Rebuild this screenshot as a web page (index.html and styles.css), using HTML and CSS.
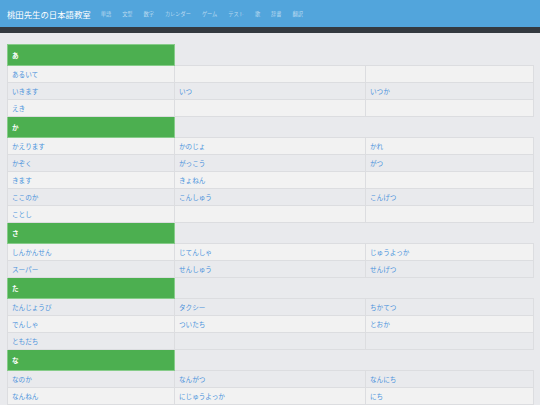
FILE: index.html
```html
<!DOCTYPE html>
<html lang="ja">
<head>
<meta charset="utf-8">
<title>桃田先生の日本語教室</title>
<link rel="stylesheet" href="styles.css">
</head>
<body>
<header class="navbar">
  <a class="brand" href="#">桃田先生の日本語教室</a>
  <nav class="nav">
    <a href="#">単語</a>
    <a href="#">文型</a>
    <a href="#">数字</a>
    <a href="#">カレンダー</a>
    <a href="#">ゲーム</a>
    <a href="#">テスト</a>
    <a href="#">歌</a>
    <a href="#">辞書</a>
    <a href="#">翻訳</a>
  </nav>
</header>
<div class="band"></div>
<main class="content">
  <table class="words">
    <colgroup><col class="c1"><col class="c2"><col class="c3"></colgroup>
    <tbody>
      <tr class="kana"><th>あ</th></tr>
      <tr><td><a href="#">あるいて</a></td><td></td><td></td></tr>
      <tr><td><a href="#">いきます</a></td><td><a href="#">いつ</a></td><td><a href="#">いつか</a></td></tr>
      <tr><td><a href="#">えき</a></td><td></td><td></td></tr>
      <tr class="kana"><th>か</th></tr>
      <tr><td><a href="#">かえります</a></td><td><a href="#">かのじょ</a></td><td><a href="#">かれ</a></td></tr>
      <tr><td><a href="#">かぞく</a></td><td><a href="#">がっこう</a></td><td><a href="#">がつ</a></td></tr>
      <tr><td><a href="#">きます</a></td><td><a href="#">きょねん</a></td><td></td></tr>
      <tr><td><a href="#">ここのか</a></td><td><a href="#">こんしゅう</a></td><td><a href="#">こんげつ</a></td></tr>
      <tr><td><a href="#">ことし</a></td><td></td><td></td></tr>
      <tr class="kana"><th>さ</th></tr>
      <tr><td><a href="#">しんかんせん</a></td><td><a href="#">じてんしゃ</a></td><td><a href="#">じゅうよっか</a></td></tr>
      <tr><td><a href="#">スーパー</a></td><td><a href="#">せんしゅう</a></td><td><a href="#">せんげつ</a></td></tr>
      <tr class="kana"><th>た</th></tr>
      <tr><td><a href="#">たんじょうび</a></td><td><a href="#">タクシー</a></td><td><a href="#">ちかてつ</a></td></tr>
      <tr><td><a href="#">でんしゃ</a></td><td><a href="#">ついたち</a></td><td><a href="#">とおか</a></td></tr>
      <tr><td><a href="#">ともだち</a></td><td></td><td></td></tr>
      <tr class="kana"><th>な</th></tr>
      <tr><td><a href="#">なのか</a></td><td><a href="#">なんがつ</a></td><td><a href="#">なんにち</a></td></tr>
      <tr><td><a href="#">なんねん</a></td><td><a href="#">にじゅうよっか</a></td><td><a href="#">にち</a></td></tr>
    </tbody>
  </table>
</main>
</body>
</html>
```

FILE: styles.css
```css
html, body {
  margin: 0;
  padding: 0;
}
body {
  background: #e9eaed;
  font-family: "Noto Sans CJK JP", "Noto Sans", sans-serif;
  overflow: hidden;
}
a {
  text-decoration: none;
}
.navbar {
  height: 27px;
  background: #52a5dc;
  display: flex;
  align-items: center;
  padding: 0 7px;
}
.brand {
  color: #ffffff;
  font-size: 8.4px;
  margin-right: 10px;
  white-space: nowrap;
}
.nav {
  display: flex;
  gap: 11px;
}
.nav a {
  color: rgba(255, 255, 255, 0.6);
  font-size: 5.2px;
  white-space: nowrap;
}
.band {
  height: 6px;
  background: #343a40;
}
.content {
  padding: 11px 7px 0;
}
.words {
  width: 526px;
  table-layout: fixed;
  border-collapse: collapse;
  font-size: 6.6px;
}
.c1 { width: 167px; }
.c2 { width: 191px; }
.c3 { width: 168px; }
.words td {
  height: 16px;
  padding: 0 4px;
  border: 1px solid #dcdde0;
  vertical-align: middle;
  white-space: nowrap;
}
.words tr:nth-child(even) td {
  background: #f2f2f2;
}
.words td a {
  color: #4a92dc;
}
.kana th {
  height: 20px;
  padding: 0 4px;
  background: #4caf50;
  border: 1px solid #86cc89;
  color: #ffffff;
  text-align: left;
  font-weight: bold;
  font-size: 6.6px;
  vertical-align: middle;
}
```
